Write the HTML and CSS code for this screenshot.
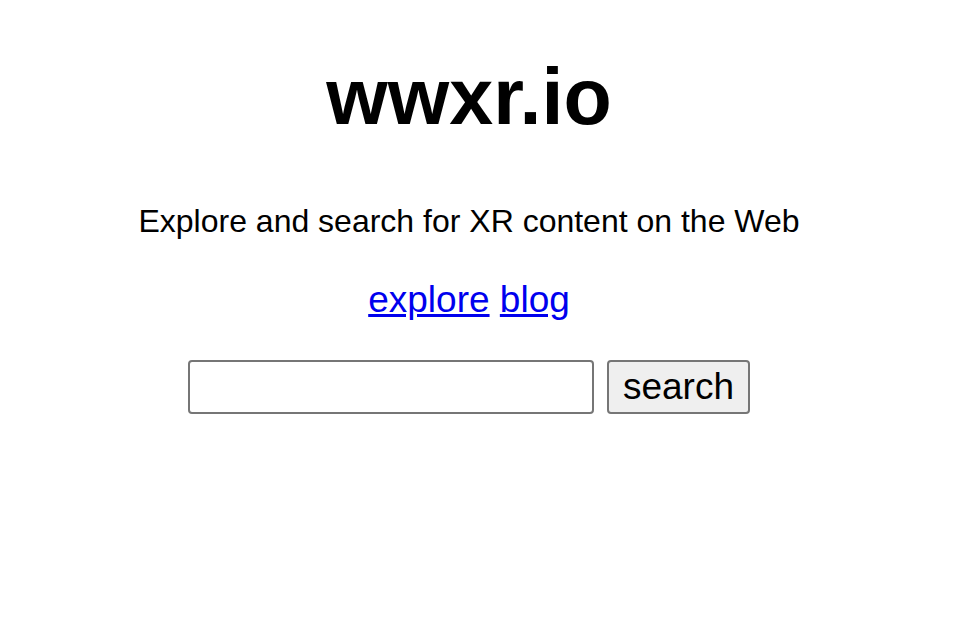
FILE: index.html
```html
<!DOCTYPE html>
<html lang="en">
<head>
    <meta charset="UTF-8">
    <meta name="viewport" content="width=device-width, initial-scale=1.0">
    <title>wwxr.io</title>
    <link rel="stylesheet" href="styles.css">
</head>
<body>
    <div class="container">
        <h1>wwxr.io</h1>

        <p class="tagline">Explore and search for XR content on the Web</p>

        <p class="links">
            <a href="#">explore</a>
            <a href="#">blog</a>
        </p>

        <form class="search-form" onsubmit="return false;">
            <input type="text" name="q">
            <button type="submit">search</button>
        </form>
    </div>
</body>
</html>
```

FILE: styles.css
```css
* {
    box-sizing: border-box;
    margin: 0;
    padding: 0;
}

body {
    font-family: "Liberation Sans", Arial, Helvetica, sans-serif;
    background: #fff;
    color: #000;
}

.container {
    width: 938px;
    text-align: center;
    padding-top: 52px;
}

h1 {
    font-size: 79px;
    line-height: 90px;
    font-weight: bold;
}

.tagline {
    font-size: 32px;
    line-height: 40px;
    margin-top: 59px;
}

.links {
    font-size: 37px;
    line-height: 44px;
    margin-top: 37px;
}

.links a {
    color: #0000ee;
}

.search-form {
    display: flex;
    justify-content: center;
    gap: 13px;
    margin-top: 38px;
}

input {
    width: 406px;
    height: 54px;
    border: 2px solid #767676;
    border-radius: 4px;
    font-size: 37px;
    font-family: inherit;
    padding: 0 6px;
}

button {
    width: 143px;
    height: 54px;
    background: #efefef;
    border: 2px solid #767676;
    border-radius: 4px;
    font-size: 37px;
    font-family: inherit;
    color: #000;
}
```
